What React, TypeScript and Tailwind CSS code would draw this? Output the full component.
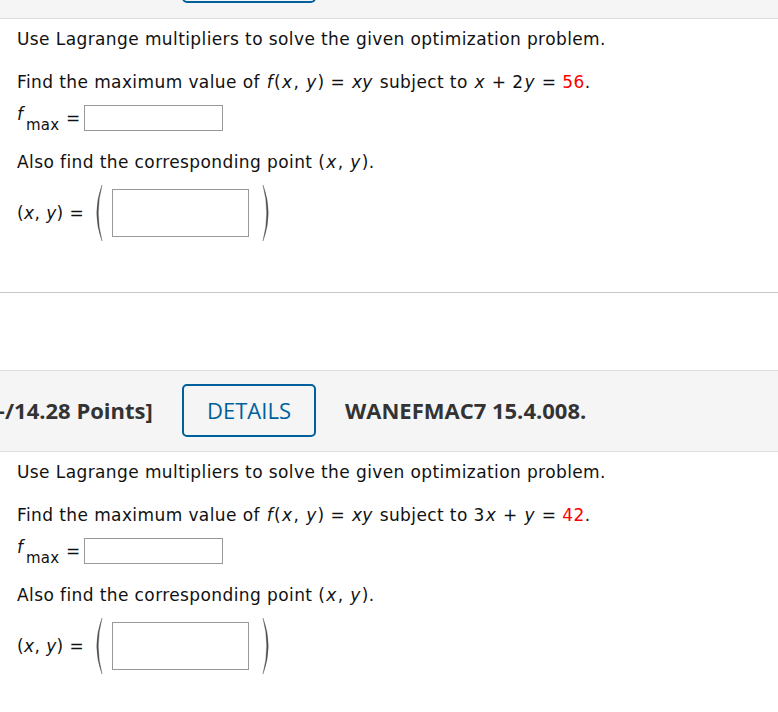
import React from 'react';

const body = "font-['DejaVu_Sans',Verdana,sans-serif] text-[17px] tracking-[0.4px] text-[#111]";
const head = "font-['Open_Sans',sans-serif]";

// math variable: italic with a little side bearing
const V: React.FC<{ children: React.ReactNode }> = ({ children }) => <i className="px-[1px]">{children}</i>;

// tall brackets drawn as thin crescents, thicker in the middle
const Paren: React.FC<{ side: 'left' | 'right' }> = ({ side }) => (
  <svg width="12" height="58" viewBox="0 0 12 58" className="shrink-0">
    {side === 'left' ? (
      <path d="M10 1 Q-0.5 29 10 57 Q2.6 29 10 1 Z" fill="#4a4a4a" stroke="#666" strokeWidth="0.4" />
    ) : (
      <path d="M2 1 Q12.5 29 2 57 Q9.4 29 2 1 Z" fill="#4a4a4a" stroke="#666" strokeWidth="0.4" />
    )}
  </svg>
);

const Question: React.FC<{ constraint: React.ReactNode; value: string }> = ({ constraint, value }) => (
  <div className={`${body} px-[17px] pt-[10px]`}>
    <p className="leading-[20px] whitespace-nowrap">Use Lagrange multipliers to solve the given optimization problem.</p>
    <p className="leading-[20px] mt-[23px] whitespace-nowrap">
      Find the maximum value of <V>f</V>(<V>x</V>, <V>y</V>) = <V>xy</V> subject to {constraint} ={' '}
      <span className="text-[#f00]">{value}</span>.
    </p>
    <div className="flex items-center mt-[13px] h-[26px]">
      <span className="relative w-[49px] h-[26px] shrink-0">
        <i className="absolute left-0 top-[-1px] leading-[20px]">f</i>
        <span className="absolute left-[9px] top-[10px] leading-[20px] text-[15px] tracking-[0.2px]">max</span>
      </span>
      <span className="w-[18px] leading-[20px] shrink-0">=</span>
      <span className="w-[139px] h-[26px] border border-[#999] bg-white" />
    </div>
    <p className="leading-[20px] mt-[21px] whitespace-nowrap">
      Also find the corresponding point (<V>x</V>, <V>y</V>).
    </p>
    <div className="flex items-center mt-[12px] h-[58px]">
      <span className="w-[75px] leading-[20px] whitespace-nowrap shrink-0">(<i>x</i>, <i>y</i>) =</span>
      <Paren side="left" />
      <span className="ml-[8px] w-[137px] h-[48px] border border-[#999] bg-white" />
      <span className="ml-[12px]"><Paren side="right" /></span>
    </div>
  </div>
);

const DetailsButton: React.FC<{ className?: string; label?: string }> = ({ className, label }) => (
  <div className={`w-[134px] h-[53px] border-2 border-[#00609c] rounded-[5px] flex items-center justify-center text-[#00609c] text-[22px] ${head} ${className ?? ''}`}>
    {label}
  </div>
);

export default function App() {
  return (
    <div className="w-[778px] h-[712px] overflow-hidden bg-white">
      <div className="h-[19px] bg-[#f5f5f5] border-b border-[#ddd] flex items-start">
        <DetailsButton className="ml-[182px] mt-[-50px]" />
      </div>
      <div className="h-[273px]">
        <Question constraint={<><V>x</V> + 2<V>y</V></>} value="56" />
      </div>
      <div className="h-[78px] border-t border-[#c8c8c8]" />
      <div className="h-[82px] bg-[#f5f5f5] border-y border-[#ddd] flex items-center whitespace-nowrap pb-[2px]">
        <span className={`${head} font-bold text-[22px] leading-[30px] text-[#333] ml-[-6px] w-[188px] shrink-0`}>–/14.28 Points]</span>
        <DetailsButton label="DETAILS" className="shrink-0 mt-[1px]" />
        <span className={`${head} font-bold text-[22px] leading-[30px] text-[#333] ml-[29px]`}>WANEFMAC7 15.4.008.</span>
      </div>
      <Question constraint={<>3<V>x</V> + <V>y</V></>} value="42" />
    </div>
  );
}
